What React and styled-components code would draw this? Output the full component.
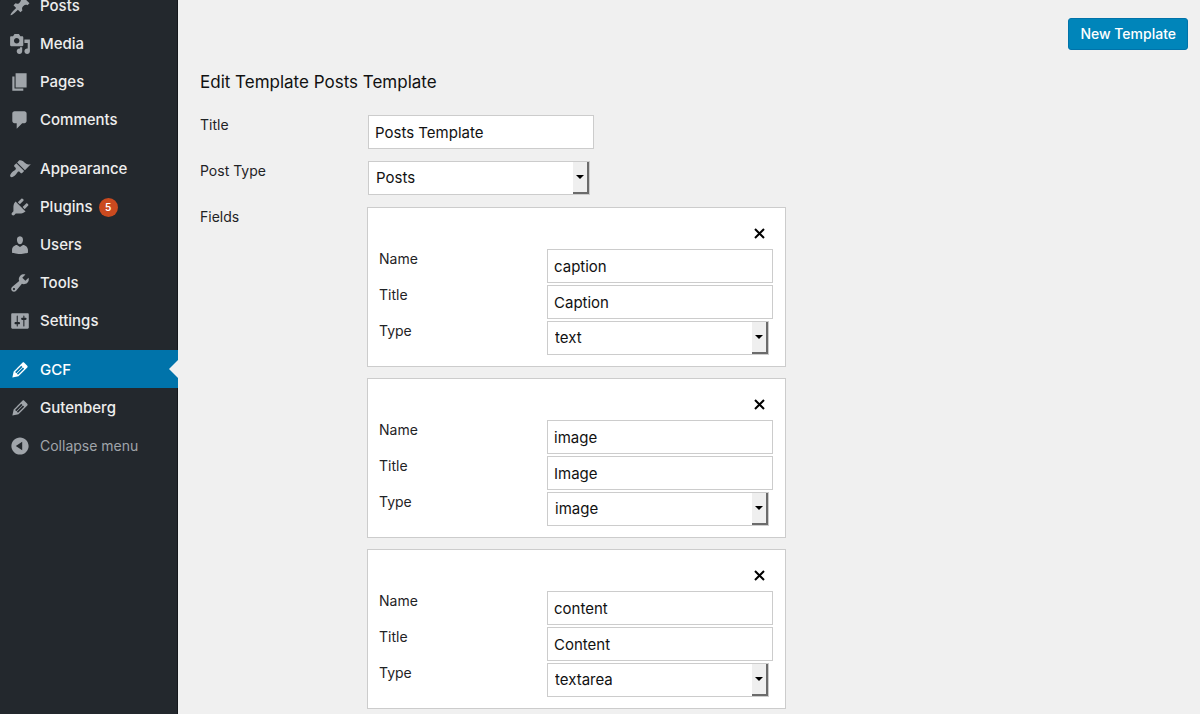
import React, { useId } from "react";
import styled, { createGlobalStyle } from "styled-components";

const GlobalStyle = createGlobalStyle`
  *, *::before, *::after { box-sizing: border-box; }
  body {
    margin: 0;
    background: #f0f0f0;
    color: #1f2326;
    font-family: Inter, "Liberation Sans", sans-serif;
    font-size: 14px;
    line-height: 20px;
  }
`;

const Page = styled.div`
  display: flex;
  min-height: 100vh;
  overflow: hidden;
`;

const Sidebar = styled.nav`
  flex: 0 0 178px;
  background: #23282d;
  border-right: 1px solid #14181c;
`;

/* The menu is scrolled a little, so its first entry is cut by the window. */
const MenuList = styled.ul`
  list-style: none;
  margin: -14px 0 0;
  padding: 0;
`;

const MenuItem = styled.li`
  margin-top: ${(p) => (p.$group ? "11px" : "0")};
`;

const MenuLink = styled.a`
  position: relative;
  display: flex;
  align-items: center;
  gap: 9px;
  height: 38px;
  padding: 2px 0 0 9px;
  margin-right: -1px;
  font-size: 15px;
  font-weight: 500;
  text-decoration: none;
  color: ${(p) => (p.$active ? "#fff" : "#eee")};
  background: ${(p) => (p.$active ? "#0073aa" : "transparent")};

  &::after {
    content: "";
    display: ${(p) => (p.$active ? "block" : "none")};
    position: absolute;
    right: 0;
    top: 10px;
    border: 9px solid transparent;
    border-left-width: 0;
    border-right-color: #f0f0f0;
  }
`;

const CollapseButton = styled.button`
  display: flex;
  align-items: center;
  gap: 9px;
  width: 100%;
  height: 38px;
  padding: 2px 0 0 9px;
  border: 0;
  background: none;
  color: #a0a5aa;
  font: inherit;
  cursor: pointer;
`;

const MenuIcon = styled.svg`
  flex: none;
  width: 22px;
  height: 22px;
  fill: ${(p) => (p.$active ? "#fff" : "#a0a5aa")};
`;

const Badge = styled.span`
  width: 19px;
  height: 19px;
  margin-left: -3px;
  border-radius: 50%;
  background: #ca4a1f;
  color: #fff;
  font-size: 10px;
  font-weight: 600;
  line-height: 19px;
  text-align: center;
`;

const Main = styled.main`
  flex: 1;
  min-width: 0;
  padding: 18px 12px 5px 22px;
`;

const Toolbar = styled.header`
  display: flex;
  justify-content: flex-end;
`;

const PrimaryButton = styled.button`
  height: 32px;
  padding: 0 11px;
  border: 1px solid #0073aa;
  border-radius: 3px;
  background: #0085ba;
  color: #fff;
  font: inherit;
  font-weight: 500;
  cursor: pointer;
`;

const Heading = styled.h1`
  margin: 20px 0;
  color: #111;
  font-size: 17px;
  font-weight: 400;
  line-height: 24px;
`;

const Form = styled.form`
  display: grid;
  gap: 10px;
`;

const Row = styled.div`
  display: grid;
  grid-template-columns: 167px minmax(0, 1fr);
  align-items: start;
`;

const Label = styled.label`
  padding-top: 1px;
`;

const TextInput = styled.input`
  width: 226px;
  height: 34px;
  margin: 1px;
  padding: 0 6px;
  border: 1px solid #ccc;
  border-radius: 0;
  background: #fff;
  color: #111;
  font: inherit;
  font-size: 15px;
`;

const SelectWrap = styled.div`
  position: relative;
  width: 222px;
  height: 34px;
  margin: 1px;
`;

const Select = styled.select`
  appearance: none;
  width: 100%;
  height: 100%;
  padding: 0 20px 0 7px;
  border: 1px solid #ccc;
  border-radius: 0;
  background: #fff;
  color: #111;
  font: inherit;
  font-size: 15px;
`;

const SelectArrow = styled.span`
  position: absolute;
  top: 1px;
  right: 1px;
  bottom: 1px;
  display: flex;
  align-items: center;
  justify-content: center;
  width: 16px;
  background: #efefef;
  border: solid #6b6b6b;
  border-width: 0 2px 2px 0;
  pointer-events: none;

  &::before {
    content: "";
    border: 4px solid transparent;
    border-top-color: #000;
    border-bottom-width: 0;
  }
`;

const CardList = styled.div`
  display: grid;
  gap: 11px;
  justify-items: start;
  margin: 1px 0;
`;

const Card = styled.fieldset`
  min-width: 0;
  margin: 0;
  padding: 11px 11px 10px;
  border: 1px solid #ccc;
  background: #fff;
`;

const CardHeader = styled.div`
  display: flex;
  justify-content: flex-end;
`;

const RemoveButton = styled.button`
  display: flex;
  align-items: center;
  justify-content: center;
  width: 29px;
  height: 29px;
  padding: 0;
  border: 0;
  background: none;
  cursor: pointer;

  svg {
    width: 11px;
    height: 11px;
    fill: none;
    stroke: #000;
    stroke-width: 2;
  }
`;

const icons = {
  post: "M10.44 3.02l1.82-1.82 6.36 6.35-1.83 1.82c-1.05-.68-2.48-.57-3.41.36l-.75.75c-.92.93-1.04 2.35-.35 3.41l-1.83 1.82-2.41-2.41-2.8 2.79c-.42.42-3.38 2.71-3.8 2.29s1.86-3.39 2.28-3.81l2.79-2.79L4.1 9.36l1.83-1.82c1.05.69 2.48.57 3.4-.36l.75-.75c.93-.92 1.05-2.35.36-3.41z",
  media: "M13 11V4c0-.55-.45-1-1-1h-1.67L9 1H5L3.67 3H2c-.55 0-1 .45-1 1v7c0 .55.45 1 1 1h10c.55 0 1-.45 1-1zM7 4.5c1.38 0 2.5 1.12 2.5 2.5S8.38 9.5 7 9.5 4.5 8.38 4.5 7 5.62 4.5 7 4.5zM14 6h5v10.5c0 1.38-1.12 2.5-2.5 2.5S14 17.88 14 16.5s1.12-2.5 2.5-2.5c.17 0 .34.02.5.05V9h-3V6zm-4 8.05V13h2v3.5c0 1.38-1.12 2.5-2.5 2.5S7 17.88 7 16.5 8.12 14 9.5 14c.17 0 .34.02.5.05z",
  page: "M6 15V2h10v13H6zm-1 1h8v2H3V5h2v11z",
  comments: "M5 2h9c1.1 0 2 .9 2 2v7c0 1.1-.9 2-2 2h-2l-5 5v-5H5c-1.1 0-2-.9-2-2V4c0-1.1.9-2 2-2z",
  appearance: "M14.48 11.06L7.41 3.99l1.5-1.5c.5-.56 2.3-.47 3.51.32 1.21.8 1.43 1.28 2.91 2.1 1.18.64 2.45 1.26 4.45.85zm-.71.71L6.7 4.7 4.93 6.47c-.39.39-.39 1.02 0 1.41l1.06 1.06c.39.39.39 1.03 0 1.42-.6.6-1.43 1.11-2.21 1.69-.35.26-.7.53-1.01.84C1.43 14.23.4 16.08 1.4 17.07c.99 1 2.84-.03 4.18-1.36.31-.31.58-.66.85-1.02.57-.78 1.08-1.61 1.69-2.21.39-.39 1.02-.39 1.41 0l1.06 1.06c.39.39 1.02.39 1.41 0z",
  plugins: "M13.11 4.36L9.87 7.6 8 5.73l3.24-3.24c.35-.34 1.05-.2 1.56.32.52.51.66 1.21.31 1.55zm-8 1.77l.91-1.12 9.01 9.01-1.19.84c-.71.71-2.63 1.16-3.82 1.16H6.14L4.9 17.26c-.59.59-1.54.59-2.12 0-.59-.58-.59-1.53 0-2.12l1.24-1.24v-3.88c0-1.13.4-3.19 1.09-3.89zm7.26 3.97l3.24-3.24c.34-.35 1.04-.21 1.55.31.52.51.66 1.21.31 1.55l-3.24 3.25z",
  users: "M10 9.25c-2.27 0-2.73-3.44-2.73-3.44C7 4.02 7.82 2 9.97 2c2.16 0 2.98 2.02 2.71 3.81 0 0-.41 3.44-2.68 3.44zm0 2.57L12.72 10c2.39 0 4.52 2.33 4.52 4.53v2.49s-3.65 1.13-7.24 1.13c-3.65 0-7.24-1.13-7.24-1.13v-2.49c0-2.25 1.94-4.48 4.47-4.48z",
  tools: "M16.68 9.77c-1.34 1.34-3.3 1.67-4.95.99l-5.41 6.52c-.99.99-2.59.99-3.58 0s-.99-2.59 0-3.57l6.52-5.42c-.68-1.65-.35-3.61.99-4.95 1.28-1.28 3.12-1.62 4.72-1.06l-2.89 2.89 2.82 2.82 2.86-2.87c.53 1.58.18 3.39-1.08 4.65zM3.81 16.21c.4.39 1.04.39 1.43 0 .4-.4.4-1.04 0-1.43-.39-.4-1.03-.4-1.43 0-.39.39-.39 1.03 0 1.43z",
  settings: "M18 16V4c0-.55-.45-1-1-1H3c-.55 0-1 .45-1 1v12c0 .55.45 1 1 1h14c.55 0 1-.45 1-1zM8 11h1c.55 0 1 .45 1 1s-.45 1-1 1H8v1.5c0 .28-.22.5-.5.5s-.5-.22-.5-.5V13H6c-.55 0-1-.45-1-1s.45-1 1-1h1V5.5c0-.28.22-.5.5-.5s.5.22.5.5V11zm5-2h-1c-.55 0-1-.45-1-1s.45-1 1-1h1V5.5c0-.28.22-.5.5-.5s.5.22.5.5V7h1c.55 0 1 .45 1 1s-.45 1-1 1h-1v5.5c0 .28-.22.5-.5.5s-.5-.22-.5-.5V9z",
  edit: "M13.89 3.39l2.71 2.72c.46.46.42 1.24.03 1.64l-8.01 8.02-5.56 1.16 1.16-5.58s7.6-7.63 7.99-8.03c.39-.39 1.22-.39 1.68.07zm-2.73 2.79l-5.59 5.61 1.11 1.11 5.54-5.65zm-2.97 8.23l5.58-5.6-1.07-1.08-5.59 5.6z",
  collapse: "M10 2.16c4.33 0 7.84 3.51 7.84 7.84s-3.51 7.84-7.84 7.84S2.16 14.33 2.16 10 5.71 2.16 10 2.16zm2 11.72V6.12L6.18 9.97z",
};

const menu = [
  { label: "Posts", icon: "post" },
  { label: "Media", icon: "media" },
  { label: "Pages", icon: "page" },
  { label: "Comments", icon: "comments" },
  { label: "Appearance", icon: "appearance", group: true },
  { label: "Plugins", icon: "plugins", count: 5 },
  { label: "Users", icon: "users" },
  { label: "Tools", icon: "tools" },
  { label: "Settings", icon: "settings" },
  { label: "GCF", icon: "edit", group: true, active: true },
  { label: "Gutenberg", icon: "edit" },
];

const fields = [
  { name: "caption", title: "Caption", type: "text" },
  { name: "image", title: "Image", type: "image" },
  { name: "content", title: "Content", type: "textarea" },
];

function Icon({ name, active }) {
  return (
    <MenuIcon viewBox="0 0 20 20" aria-hidden="true" $active={active}>
      <path d={icons[name]} fillRule="evenodd" />
    </MenuIcon>
  );
}

function TextRow({ label, value }) {
  const id = useId();
  return (
    <Row>
      <Label htmlFor={id}>{label}</Label>
      <TextInput id={id} type="text" defaultValue={value} />
    </Row>
  );
}

function SelectRow({ label, value, options }) {
  const id = useId();
  return (
    <Row>
      <Label htmlFor={id}>{label}</Label>
      <SelectWrap>
        <Select id={id} defaultValue={value}>
          {options.map((o) => (
            <option key={o}>{o}</option>
          ))}
        </Select>
        <SelectArrow />
      </SelectWrap>
    </Row>
  );
}

function FieldCard({ field }) {
  return (
    <Card>
      <CardHeader>
        <RemoveButton type="button" aria-label="Remove field">
          <svg viewBox="0 0 11 11">
            <path d="M1 1l9 9M10 1l-9 9" />
          </svg>
        </RemoveButton>
      </CardHeader>
      <TextRow label="Name" value={field.name} />
      <TextRow label="Title" value={field.title} />
      <SelectRow label="Type" value={field.type} options={["text", "image", "textarea"]} />
    </Card>
  );
}

export default function App() {
  return (
    <>
      <GlobalStyle />
      <Page>
        <Sidebar>
          <MenuList>
            {menu.map((m) => (
              <MenuItem key={m.label} $group={m.group}>
                <MenuLink href="#" $active={m.active}>
                  <Icon name={m.icon} active={m.active} />
                  {m.label}
                  {m.count && <Badge>{m.count}</Badge>}
                </MenuLink>
              </MenuItem>
            ))}
            <MenuItem>
              <CollapseButton type="button">
                <Icon name="collapse" />
                Collapse menu
              </CollapseButton>
            </MenuItem>
          </MenuList>
        </Sidebar>
        <Main>
          <Toolbar>
            <PrimaryButton type="button">New Template</PrimaryButton>
          </Toolbar>
          <Heading>Edit Template Posts Template</Heading>
          <Form>
            <TextRow label="Title" value="Posts Template" />
            <SelectRow label="Post Type" value="Posts" options={["Posts", "Pages"]} />
            <Row>
              <Label as="span">Fields</Label>
              <CardList>
                {fields.map((f) => (
                  <FieldCard key={f.name} field={f} />
                ))}
              </CardList>
            </Row>
          </Form>
        </Main>
      </Page>
    </>
  );
}
